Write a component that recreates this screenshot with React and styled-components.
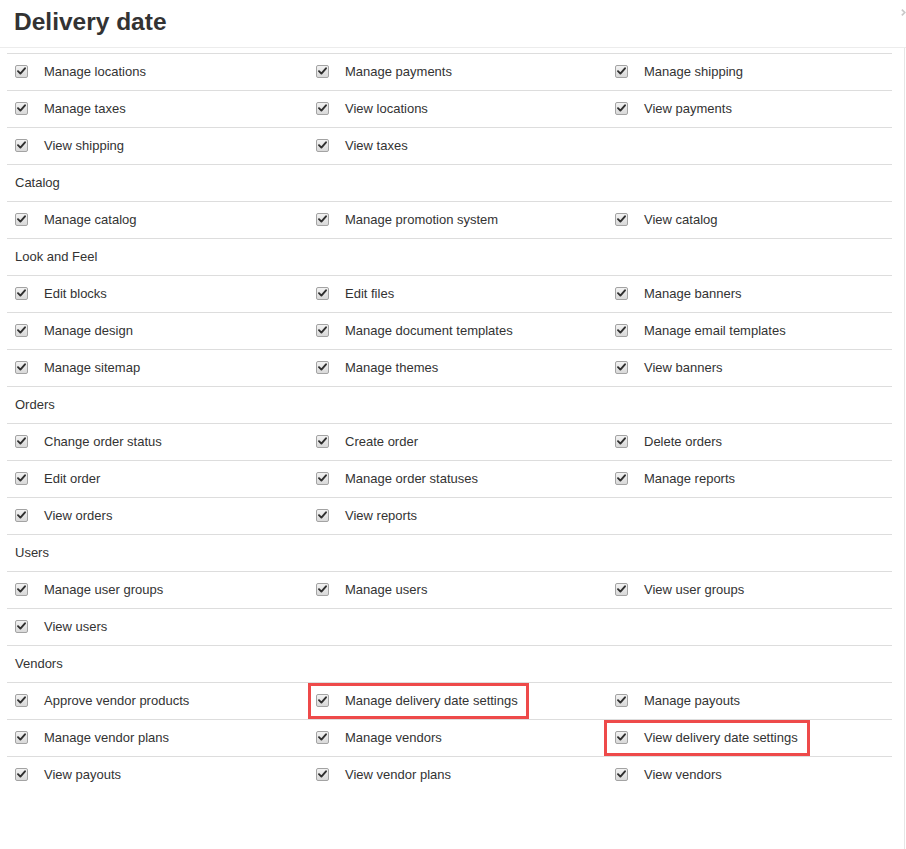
import React from "react";
import styled, { createGlobalStyle } from "styled-components";

const groups = [
  {
    title: null,
    items: [
      "Manage locations",
      "Manage payments",
      "Manage shipping",
      "Manage taxes",
      "View locations",
      "View payments",
      "View shipping",
      "View taxes",
    ],
  },
  {
    title: "Catalog",
    items: ["Manage catalog", "Manage promotion system", "View catalog"],
  },
  {
    title: "Look and Feel",
    items: [
      "Edit blocks",
      "Edit files",
      "Manage banners",
      "Manage design",
      "Manage document templates",
      "Manage email templates",
      "Manage sitemap",
      "Manage themes",
      "View banners",
    ],
  },
  {
    title: "Orders",
    items: [
      "Change order status",
      "Create order",
      "Delete orders",
      "Edit order",
      "Manage order statuses",
      "Manage reports",
      "View orders",
      "View reports",
    ],
  },
  {
    title: "Users",
    items: ["Manage user groups", "Manage users", "View user groups", "View users"],
  },
  {
    title: "Vendors",
    items: [
      "Approve vendor products",
      "Manage delivery date settings",
      "Manage payouts",
      "Manage vendor plans",
      "Manage vendors",
      "View delivery date settings",
      "View payouts",
      "View vendor plans",
      "View vendors",
    ],
  },
];

// red annotation boxes: offset from the cell's left edge, extra room on the right
const highlighted = {
  "Manage delivery date settings": { left: 0, right: 8 },
  "View delivery date settings": { left: -3, right: 12 },
};

const Checkbox = () => (
  <Box>
    <svg width="9" height="8" viewBox="0 0 9 8">
      <path
        d="M1 4.2 L3.4 6.6 L8 1.3"
        fill="none"
        stroke="#2f2f2f"
        strokeWidth="1.9"
        strokeLinecap="round"
        strokeLinejoin="round"
      />
    </svg>
  </Box>
);

const Row = ({ items }) => {
  const cells = [...items];
  while (cells.length % 3) cells.push(null);
  return cells.map((label, i) => (
    <Cell key={i}>
      {label && (
        <>
          <Checkbox />
          <Label>{label}</Label>
          {highlighted[label] && (
            <Mark style={{ left: highlighted[label].left }} $extra={highlighted[label].right}>
              <Hidden>
                <Checkbox />
                <Label>{label}</Label>
              </Hidden>
            </Mark>
          )}
        </>
      )}
    </Cell>
  ));
};

export default function App() {
  return (
    <>
      <GlobalStyle />
      <Page>
        <Header>
          <Title>Delivery date</Title>
          <Toggle>
            <svg width="6" height="9" viewBox="0 0 6 9">
              <path d="M1 1 L4.5 4.5 L1 8" fill="none" stroke="#c8c8c8" strokeWidth="2" />
            </svg>
          </Toggle>
        </Header>
        <Body>
          <Table>
            {groups.map((g, gi) => (
              <React.Fragment key={gi}>
                {g.title && <GroupCell>{g.title}</GroupCell>}
                <Row items={g.items} />
              </React.Fragment>
            ))}
          </Table>
        </Body>
      </Page>
    </>
  );
}

const GlobalStyle = createGlobalStyle`
  html, body {
    margin: 0;
    background: #fff;
  }
  body {
    font-family: "Liberation Sans", Arial, sans-serif;
    color: #333;
    font-size: 13px;
  }
`;

const Page = styled.div`
  width: 906px;
  min-height: 849px;
  display: flex;
  flex-direction: column;
`;

const Header = styled.div`
  height: 48px;
  border-bottom: 1px solid #ececec;
  display: flex;
  justify-content: space-between;
  box-sizing: border-box;
  padding-left: 14px;
`;

const Title = styled.h1`
  margin: 0;
  padding-top: 7px;
  font-size: 24.5px;
  font-weight: bold;
  color: #333;
  line-height: 30px;
`;

const Toggle = styled.div`
  padding-top: 8px;
  width: 5px;
  overflow: hidden;
  display: flex;
  align-items: flex-start;
`;

const Body = styled.div`
  flex: 1;
  width: 905px;
  border-right: 1px solid #e6e6e6;
  box-sizing: border-box;
  padding: 5px 0 0 7px;
`;

const Table = styled.div`
  width: 885px;
  display: grid;
  grid-template-columns: 301px 299px 1fr;
`;

const Cell = styled.div`
  position: relative;
  height: 37px;
  box-sizing: border-box;
  border-top: 1px solid #dddddd;
  display: flex;
  align-items: center;
  padding-left: 8px;
  padding-bottom: 2px;
`;

const GroupCell = styled(Cell)`
  grid-column: 1 / -1;
`;

const Box = styled.span`
  width: 13px;
  height: 13px;
  box-sizing: border-box;
  border: 1px solid #a3a3a3;
  border-radius: 2px;
  background: linear-gradient(#f2f2f2, #d9d9d9);
  display: inline-flex;
  align-items: center;
  justify-content: center;
  flex-shrink: 0;
`;

const Label = styled.span`
  margin-left: 16px;
  white-space: nowrap;
`;

const Mark = styled.span`
  position: absolute;
  top: 0;
  bottom: 0;
  border: 3px solid #ee4a4a;
  box-sizing: border-box;
  display: flex;
  align-items: center;
  padding-left: 5px;
  padding-right: ${(p) => p.$extra}px;
`;

const Hidden = styled.span`
  visibility: hidden;
  display: flex;
  align-items: center;
`;
